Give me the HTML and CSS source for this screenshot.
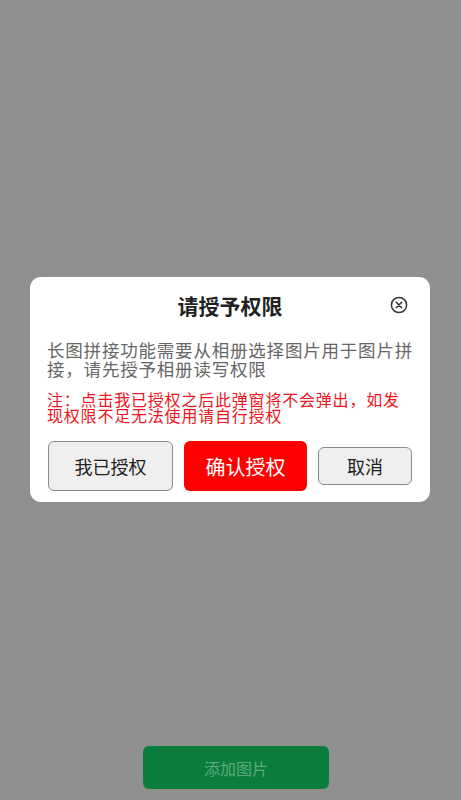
FILE: index.html
```html
<!DOCTYPE html>
<html lang="zh">
<head>
<meta charset="utf-8">
<title>请授予权限</title>
<link rel="stylesheet" href="styles.css">
</head>
<body>
<div class="page">
  <div class="dialog">
    <div class="dialog-head">
      <h1 class="title">请授予权限</h1>
      <button class="close" aria-label="关闭">
        <svg width="18" height="18" viewBox="0 0 18 18">
          <circle cx="9" cy="9" r="7.6" fill="none" stroke="#333" stroke-width="1.5"/>
          <path d="M6.3 6.3 L11.7 11.7 M11.7 6.3 L6.3 11.7" stroke="#333" stroke-width="1.6" stroke-linecap="round"/>
        </svg>
      </button>
    </div>
    <p class="desc">长图拼接功能需要从相册选择图片用于图片拼接，请先授予相册读写权限</p>
    <p class="note">注：点击我已授权之后此弹窗将不会弹出，如发现权限不足无法使用请自行授权</p>
    <div class="actions">
      <button class="btn btn-done">我已授权</button>
      <button class="btn btn-confirm">确认授权</button>
      <button class="btn btn-cancel">取消</button>
    </div>
  </div>
  <button class="add-btn">添加图片</button>
</div>
</body>
</html>
```
FILE: styles.css
```css
html, body {
  margin: 0;
  padding: 0;
  background: #8f8f8f;
}
body {
  font-family: "Noto Sans CJK SC", "Noto Sans", sans-serif;
}
.page {
  height: 800px;
  display: flex;
  flex-direction: column;
  align-items: flex-start;
}
.dialog {
  margin-top: 277px;
  margin-left: 30px;
  width: 400px;
  box-sizing: border-box;
  background: #fff;
  border-radius: 11px;
  padding: 14px 17px 11px 17px;
}
.dialog-head {
  position: relative;
  display: flex;
  justify-content: center;
}
.title {
  margin: 0;
  font-size: 21px;
  line-height: 28px;
  font-weight: 700;
  color: #222;
}
.close {
  position: absolute;
  right: 5px;
  top: 5px;
  width: 18px;
  height: 18px;
  padding: 0;
  border: 0;
  background: none;
  display: flex;
}
.desc {
  margin: 21px 0 0 0;
  font-size: 17.5px;
  line-height: 19px;
  letter-spacing: 0.8px;
  color: #666;
}
.note {
  margin: 13px 0 0 0;
  font-size: 16px;
  line-height: 16px;
  letter-spacing: 0.8px;
  color: #ee1420;
}
.actions {
  margin-top: 18px;
  padding: 0 1px;
  display: flex;
  align-items: center;
  gap: 11px;
}
.btn {
  font-family: inherit;
  border-radius: 6px;
  padding: 0;
  box-sizing: border-box;
}
.btn-done {
  width: 125px;
  height: 50px;
  background: #efefef;
  border: 1px solid #8a8a8a;
  color: #222;
  font-size: 18px;
}
.btn-confirm {
  width: 123px;
  height: 50px;
  background: #ff0000;
  border: 0;
  color: #fff;
  font-size: 20px;
}
.btn-cancel {
  width: 94px;
  height: 38px;
  background: #efefef;
  border: 1px solid #8a8a8a;
  color: #222;
  font-size: 18px;
}
.add-btn {
  margin-top: auto;
  margin-bottom: 11px;
  margin-left: 143px;
  width: 186px;
  height: 43px;
  border: 0;
  border-radius: 6px;
  background: #0a7d3d;
  color: #5ea97c;
  font-family: inherit;
  font-size: 16px;
  padding: 0;
}
```
